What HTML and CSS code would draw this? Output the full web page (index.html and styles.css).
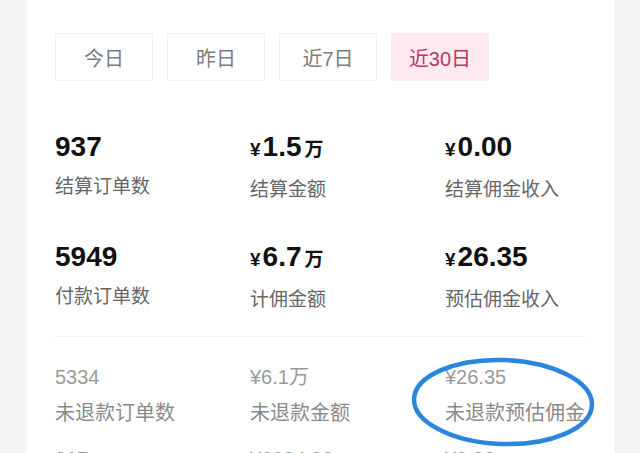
FILE: index.html
```html
<!DOCTYPE HTML>
<html lang="zh-CN">
<head>
<meta name="viewport" content="width=device-width, initial-scale=1">
<title>数据概览</title>
<link rel="stylesheet" href="styles.css">
</head>
<body>

<div class="card">
  <div class="tabs">
    <span class="tab">今日</span>
    <span class="tab">昨日</span>
    <span class="tab">近7日</span>
    <span class="tab active">近30日</span>
  </div>

  <div class="main-stats">
    <div class="stat">
      <div class="value">937</div>
      <div class="label">结算订单数</div>
    </div>
    <div class="stat">
      <div class="value"><span class="yen">¥</span>1.5<span class="unit">万</span></div>
      <div class="label">结算金额</div>
    </div>
    <div class="stat">
      <div class="value"><span class="yen">¥</span>0.00</div>
      <div class="label">结算佣金收入</div>
    </div>
    <div class="stat">
      <div class="value">5949</div>
      <div class="label">付款订单数</div>
    </div>
    <div class="stat">
      <div class="value"><span class="yen">¥</span>6.7<span class="unit">万</span></div>
      <div class="label">计佣金额</div>
    </div>
    <div class="stat">
      <div class="value"><span class="yen">¥</span>26.35</div>
      <div class="label">预估佣金收入</div>
    </div>
  </div>

  <div class="divider"></div>

  <div class="sub-stats">
    <div class="stat">
      <div class="value">5334</div>
      <div class="label">未退款订单数</div>
    </div>
    <div class="stat">
      <div class="value">¥6.1万</div>
      <div class="label">未退款金额</div>
    </div>
    <div class="stat">
      <div class="value">¥26.35</div>
      <div class="label">未退款预估佣金</div>
    </div>
    <div class="stat">
      <div class="value">317</div>
      <div class="label">退款订单数</div>
    </div>
    <div class="stat">
      <div class="value">¥6034.90</div>
      <div class="label">退款金额</div>
    </div>
    <div class="stat">
      <div class="value">¥0.00</div>
      <div class="label">退款预估佣金</div>
    </div>
  </div>

  <!-- hand-drawn mark over the screenshot -->
  <svg class="circle-mark" width="190" height="96" viewBox="0 0 190 96">
    <ellipse cx="95" cy="48" rx="89" ry="42" fill="none" stroke="#2a86dc" stroke-width="4.5" transform="rotate(2 95 48)"/>
  </svg>
</div>

</body>
</html>
```

FILE: styles.css
```css
/* Page */
body {
  margin: 0;
  background: #f4f4f4;
  font-family: 'Liberation Sans', 'Noto Sans CJK SC', sans-serif;
  overflow: hidden;
}

.card {
  position: relative;
  margin: 0 26px 0 27px;
  height: 100vh;
  overflow: hidden;
  background: #ffffff;
  padding: 33px 28px 0 28px;
  box-sizing: border-box;
}

/* Date tabs */
.tabs {
  display: flex;
  gap: 14px;
}

.tab {
  width: 98px;
  height: 48px;
  box-sizing: border-box;
  border: 1px solid #efefef;
  border-radius: 2px;
  display: flex;
  align-items: center;
  justify-content: center;
  font-size: 20px;
  color: #7c7c7c;
}

.tab.active {
  background: #fde9ef;
  border-color: #fde9ef;
  color: #b63a62;
}

/* Big numbers */
.main-stats {
  display: grid;
  grid-template-columns: repeat(3, 195px);
  row-gap: 38px;
  margin-top: 50px;
}

.main-stats .value {
  font-size: 28px;
  line-height: 32px;
  font-weight: bold;
  color: #111111;
}

.main-stats .yen {
  font-size: 19px;
  margin-right: 2px;
}

.main-stats .unit {
  font-size: 19px;
  margin-left: 3px;
}

.main-stats .label {
  margin-top: 11px;
  font-size: 19px;
  line-height: 26px;
  color: #666666;
}

.divider {
  height: 1px;
  background: #f0f0f0;
  margin-top: 23px;
}

/* Small numbers */
.sub-stats {
  display: grid;
  grid-template-columns: repeat(3, 195px);
  row-gap: 19px;
  margin-top: 27px;
}

.sub-stats .value {
  font-size: 20px;
  line-height: 26px;
  color: #9a9a9a;
}

.sub-stats .label {
  margin-top: 9px;
  font-size: 20px;
  line-height: 28px;
  color: #8a8a8a;
  white-space: nowrap;
}

.circle-mark {
  position: absolute;
  left: 381px;
  top: 354px;
}
```
